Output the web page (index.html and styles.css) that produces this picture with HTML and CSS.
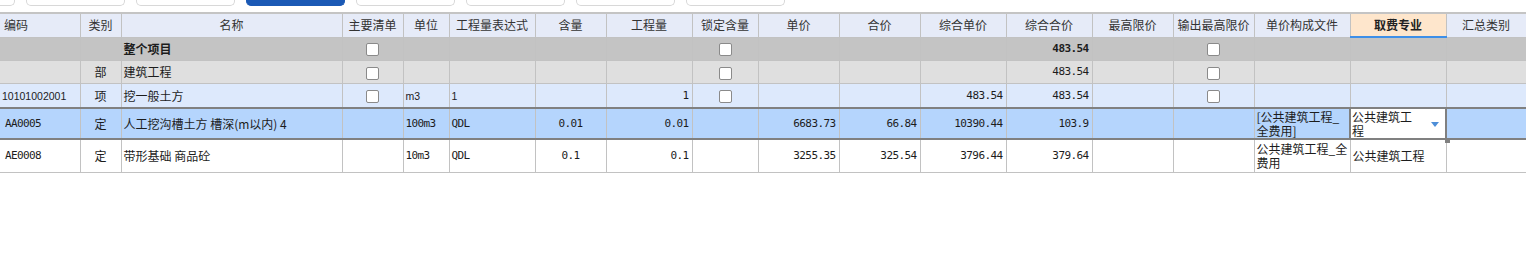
FILE: index.html
```html
<!DOCTYPE html>
<html lang="zh-CN">

<head>
    <meta charset="UTF-8">
    <meta name="viewport" content="width=device-width, initial-scale=1.0">
    <title>分部分项</title>
    <link rel="stylesheet" href="styles.css">
</head>

<body>
    <div class="tabs">
        <span class="tab first"></span>
        <span class="tab"></span>
        <span class="tab"></span>
        <span class="tab active"></span>
        <span class="tab"></span>
        <span class="tab"></span>
        <span class="tab"></span>
        <span class="tab"></span>
    </div>
    <table class="grid">
        <colgroup>
            <col class="w80">
            <col class="w41">
            <col class="w221">
            <col class="w61">
            <col class="w46">
            <col class="w86">
            <col class="w71">
            <col class="w86">
            <col class="w66">
            <col class="w81">
            <col class="w81">
            <col class="w86">
            <col class="w86">
            <col class="w81">
            <col class="w81">
            <col class="w96">
            <col class="w96">
            <col class="w80">
        </colgroup>
        <thead>
            <tr>
                <th class="left">编码</th>
                <th>类别</th>
                <th>名称</th>
                <th>主要清单</th>
                <th>单位</th>
                <th>工程量表达式</th>
                <th>含量</th>
                <th>工程量</th>
                <th>锁定含量</th>
                <th>单价</th>
                <th>合价</th>
                <th>综合单价</th>
                <th>综合合价</th>
                <th>最高限价</th>
                <th>输出最高限价</th>
                <th>单价构成文件</th>
                <th class="active">取费专业</th>
                <th>汇总类别</th>
            </tr>
        </thead>
        <tbody>
            <tr class="r-total">
                <td></td>
                <td></td>
                <td class="bold">整个项目</td>
                <td class="mid"><span class="cb"></span></td>
                <td></td>
                <td></td>
                <td></td>
                <td></td>
                <td class="mid"><span class="cb"></span></td>
                <td></td>
                <td></td>
                <td></td>
                <td class="num bold">483.54</td>
                <td></td>
                <td class="mid"><span class="cb"></span></td>
                <td></td>
                <td></td>
                <td></td>
            </tr>
            <tr class="r-part">
                <td></td>
                <td class="mid">部</td>
                <td>建筑工程</td>
                <td class="mid"><span class="cb"></span></td>
                <td></td>
                <td></td>
                <td></td>
                <td></td>
                <td class="mid"><span class="cb"></span></td>
                <td></td>
                <td></td>
                <td></td>
                <td class="num">483.54</td>
                <td></td>
                <td class="mid"><span class="cb"></span></td>
                <td></td>
                <td></td>
                <td></td>
            </tr>
            <tr class="r-item">
                <td class="code">10101002001</td>
                <td class="mid">项</td>
                <td>挖一般土方</td>
                <td class="mid"><span class="cb"></span></td>
                <td class="code">m3</td>
                <td class="code">1</td>
                <td></td>
                <td class="num">1</td>
                <td class="mid"><span class="cb"></span></td>
                <td></td>
                <td></td>
                <td class="num">483.54</td>
                <td class="num">483.54</td>
                <td></td>
                <td class="mid"><span class="cb"></span></td>
                <td></td>
                <td></td>
                <td></td>
            </tr>
            <tr class="r-sel">
                <td class="mono pad">AA0005</td>
                <td class="mid">定</td>
                <td>人工挖沟槽土方 槽深(m以内) 4</td>
                <td></td>
                <td class="mono">100m3</td>
                <td class="mono">QDL</td>
                <td class="mono mid">0.01</td>
                <td class="num">0.01</td>
                <td></td>
                <td class="num">6683.73</td>
                <td class="num">66.84</td>
                <td class="num">10390.44</td>
                <td class="num">103.9</td>
                <td></td>
                <td></td>
                <td>[公共建筑工程_<br>全费用]</td>
                <td class="editing">
                    <div class="editor">
                        <span>公共建筑工<br>程</span>
                        <svg class="drop" width="8" height="5" viewBox="0 0 8 5">
                            <path d="M0 0H8L4 5Z" fill="#4d8ed8" />
                        </svg>
                    </div>
                    <span class="handle"></span>
                </td>
                <td></td>
            </tr>
            <tr class="r-plain">
                <td class="mono pad">AE0008</td>
                <td class="mid">定</td>
                <td>带形基础 商品砼</td>
                <td></td>
                <td class="mono">10m3</td>
                <td class="mono">QDL</td>
                <td class="mono mid">0.1</td>
                <td class="num">0.1</td>
                <td></td>
                <td class="num">3255.35</td>
                <td class="num">325.54</td>
                <td class="num">3796.44</td>
                <td class="num">379.64</td>
                <td></td>
                <td></td>
                <td>公共建筑工程_全<br>费用</td>
                <td>公共建筑工程</td>
                <td></td>
            </tr>
        </tbody>
    </table>
</body>

</html>
```

FILE: styles.css
```css
body {
    margin: 0;
    background: #fff;
    font-family: "Noto Sans CJK SC", "Noto Sans", sans-serif;
    font-size: 12px;
    color: #1c1c1c;
}

.tabs {
    display: flex;
    gap: 11px;
    height: 6px;
    margin-bottom: 6px;
    overflow: hidden;
}

.tab {
    flex: none;
    box-sizing: border-box;
    width: 99px;
    height: 6px;
    border: 1px solid #d8d8d8;
    border-top: none;
    border-radius: 0 0 5px 5px;
}

.tab.first {
    width: 15px;
    border-left: none;
    border-radius: 0 0 5px 0;
}

.tab.active {
    background: #1b59b5;
    border-color: #1b59b5;
}

.grid {
    border-collapse: collapse;
    table-layout: fixed;
    width: 1526px;
    border-top: 2px solid #c4c4c4;
}

.w41 { width: 41px; }
.w46 { width: 46px; }
.w61 { width: 61px; }
.w66 { width: 66px; }
.w71 { width: 71px; }
.w80 { width: 80px; }
.w81 { width: 81px; }
.w86 { width: 86px; }
.w96 { width: 96px; }
.w221 { width: 221px; }

.grid th,
.grid td {
    border: 1px solid #c2c2c2;
    padding: 0 2px;
    line-height: 14px;
    white-space: nowrap;
    overflow: hidden;
    text-align: left;
}

.grid tr > :first-child {
    border-left: none;
}

.grid th {
    height: 22px;
    background: #e6ebf8;
    font-weight: normal;
    color: #333;
    text-align: center;
}

.grid th.left {
    text-align: left;
    padding-left: 4px;
}

.grid th.active {
    background: #fee6cc;
    font-weight: bold;
    color: #222;
    border-bottom: 2px solid #3d8fe8;
}

.r-total td {
    height: 22px;
    background: #c4c4c4;
}

.r-part td {
    height: 22px;
    background: #dfdfdf;
}

.r-item td {
    height: 23px;
    background: #dde9fc;
}

.r-sel td {
    height: 29px;
    background: #b5d5fd;
    border-top: 2px solid #808080;
    border-bottom: 2px solid #808080;
}

.r-plain td {
    height: 32px;
    background: #fff;
}

.grid .mid {
    text-align: center;
}

.grid .num {
    text-align: right;
    padding-right: 3px;
    font-family: "DejaVu Sans Mono", monospace;
    font-size: 11px;
    letter-spacing: -0.6px;
}

.grid .mono {
    font-family: "DejaVu Sans Mono", monospace;
    font-size: 11px;
    letter-spacing: -0.6px;
}

.grid .pad {
    padding-left: 5px;
}

.grid .code {
    font-family: "Liberation Sans", sans-serif;
    font-size: 10.5px;
}

.bold {
    font-weight: bold;
}

.cb {
    display: inline-block;
    box-sizing: border-box;
    width: 13px;
    height: 13px;
    border: 1px solid #8a8a8a;
    border-radius: 2px;
    background: #fff;
    vertical-align: middle;
}

.r-sel td.editing {
    position: relative;
    padding: 0 0 0 1px;
    background: #fff;
    border: 2px solid #808080;
    overflow: visible;
}

.editor {
    display: flex;
    align-items: center;
    justify-content: space-between;
    padding-right: 6px;
}

.drop {
    margin-top: 2px;
}

.handle {
    position: absolute;
    right: -5px;
    bottom: -5px;
    width: 5px;
    height: 4px;
    background: #808080;
}
```
